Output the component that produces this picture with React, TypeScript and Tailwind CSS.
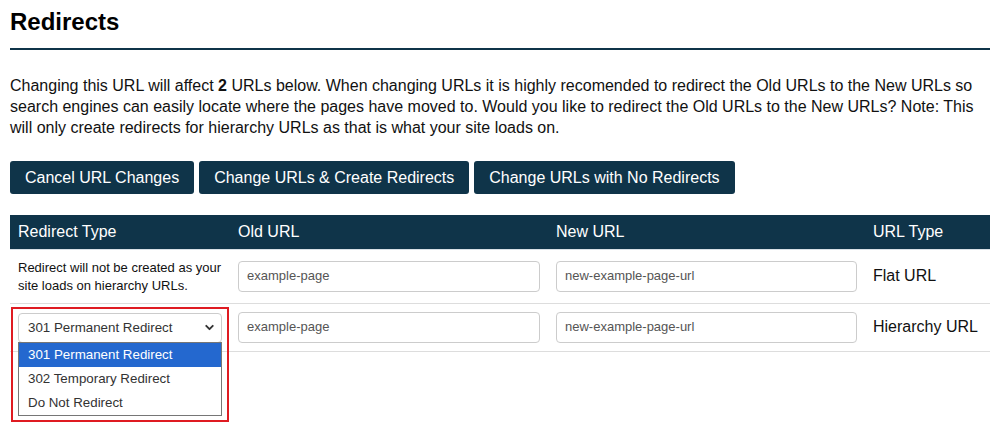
import { ChevronDown } from "lucide-react";

type Row = {
  note?: string;
  oldUrl: string;
  newUrl: string;
  urlType: string;
  select?: boolean;
};

const rows: Row[] = [
  {
    note: "Redirect will not be created as your site loads on hierarchy URLs.",
    oldUrl: "example-page",
    newUrl: "new-example-page-url",
    urlType: "Flat URL",
  },
  {
    oldUrl: "example-page",
    newUrl: "new-example-page-url",
    urlType: "Hierarchy URL",
    select: true,
  },
];

const options = ["301 Permanent Redirect", "302 Temporary Redirect", "Do Not Redirect"];

function UrlInput({ value }: { value: string }) {
  return (
    <div className="h-[31px] w-full rounded-[4px] border border-[#ccc] bg-white pl-2 flex items-center text-[13px] text-[#555]">
      {value}
    </div>
  );
}

function RedirectSelect() {
  return (
    <div className="relative">
      <div className="h-[30px] w-[204px] rounded-[4px] border border-[#ccc] bg-white pl-[9px] pr-[5px] flex items-center justify-between text-[13.33px] text-[#333]">
        <span>301 Permanent Redirect</span>
        <ChevronDown size={13} strokeWidth={3.5} className="text-[#333]" />
      </div>
      {/* open dropdown list */}
      <div className="absolute left-0 top-[29px] z-10 w-[204px] border border-[#767676] bg-white text-[13.33px] text-[#333]">
        {options.map((o, i) => (
          <div
            key={o}
            className={`h-[24px] pl-[9px] flex items-center ${i === 0 ? "bg-[#2468cf] text-white" : ""}`}
          >
            {o}
          </div>
        ))}
      </div>
    </div>
  );
}

export default function App() {
  return (
    <div className="w-[1000px] h-[430px] bg-white px-[10px] pt-[8px] text-[#222] font-['Liberation_Sans',Arial,sans-serif] overflow-hidden">
      <h1 className="text-[24px] leading-[28px] font-bold text-black pb-3 border-b-2 border-[#0f3449]">
        Redirects
      </h1>

      <p className="mt-[25px] text-[16px] leading-[21px] text-[#111]">
        Changing this URL will affect <b>2</b> URLs below. When changing URLs it is highly recomended to redirect the Old URLs to the New URLs so search engines can easily locate where the pages have moved to. Would you like to redirect the Old URLs to the New URLs? Note: This will only create redirects for hierarchy URLs as that is what your site loads on.
      </p>

      <div className="mt-[23px] flex gap-[5px]">
        <button className="h-[33px] px-[15px] rounded-[3px] bg-[#0f3449] text-white text-[16px]">Cancel URL Changes</button>
        <button className="h-[33px] px-[15px] rounded-[3px] bg-[#0f3449] text-white text-[16px]">Change URLs &amp; Create Redirects</button>
        <button className="h-[33px] px-[15px] rounded-[3px] bg-[#0f3449] text-white text-[16px]">Change URLs with No Redirects</button>
      </div>

      <table className="mt-[21px] w-[980px] border-collapse table-fixed">
        <colgroup>
          <col className="w-[220px]" />
          <col className="w-[318px]" />
          <col className="w-[317px]" />
          <col className="w-[125px]" />
        </colgroup>
        <thead>
          <tr className="bg-[#0f3449] text-white text-[16px] text-left border-b border-[#d8e0e6]">
            <th className="h-[34px] px-2 font-normal">Redirect Type</th>
            <th className="h-[34px] px-2 font-normal">Old URL</th>
            <th className="h-[34px] px-2 font-normal">New URL</th>
            <th className="h-[34px] px-2 font-normal">URL Type</th>
          </tr>
        </thead>
        <tbody>
          {rows.map((r, i) => (
            <tr key={i} className="border-b border-[#ddd]">
              <td className={`px-2 py-2 align-middle ${r.select ? "relative pt-[9px]" : ""}`}>
                {r.select ? (
                  <>
                    <RedirectSelect />
                    {/* highlight box */}
                    <div className="absolute left-[1px] top-[3px] w-[218px] h-[115px] border-2 border-[#df1b22] pointer-events-none z-20" />
                  </>
                ) : (
                  <div className="text-[13px] leading-[18px] text-[#111] pt-[1px]">{r.note}</div>
                )}
              </td>
              <td className="px-2 py-2 align-middle">
                <UrlInput value={r.oldUrl} />
              </td>
              <td className="px-2 py-2 align-middle">
                <UrlInput value={r.newUrl} />
              </td>
              <td className="px-2 py-2 align-middle text-[16px] text-[#111]">{r.urlType}</td>
            </tr>
          ))}
        </tbody>
      </table>
    </div>
  );
}
